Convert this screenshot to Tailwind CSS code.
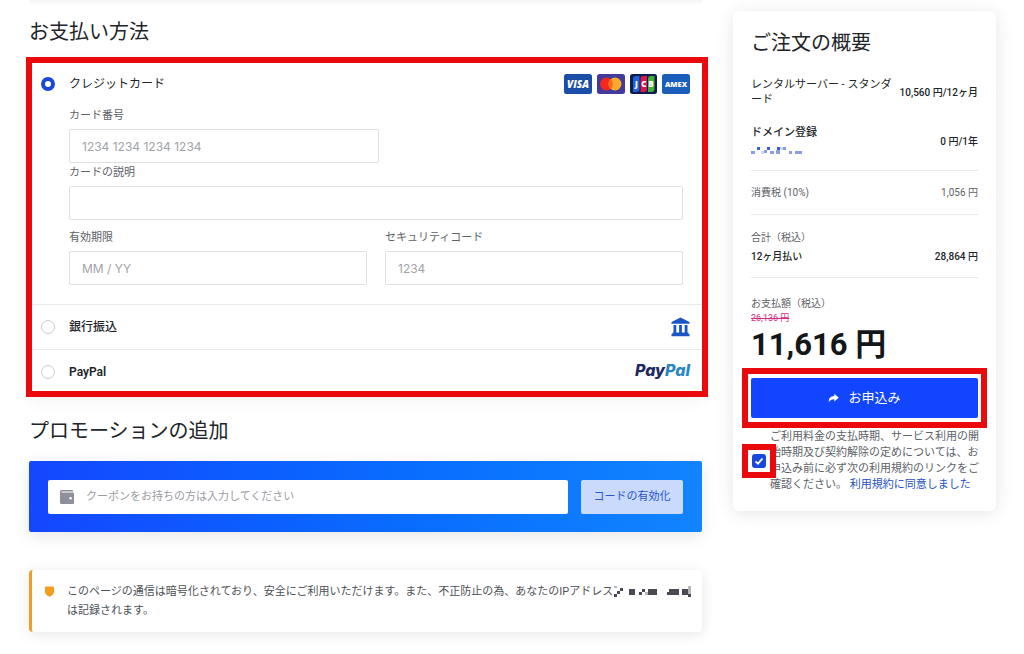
<!DOCTYPE html>
<html lang="ja">
<head>
<meta charset="utf-8">
<meta name="viewport" content="width=device-width, initial-scale=1">
<title>お支払い方法</title>
<script src="https://cdn.jsdelivr.net/npm/@tailwindcss/browser@4"></script>
</head>
<body class="bg-white font-['Roboto','Noto_Sans_CJK_JP',sans-serif] text-[#212529]">
<main class="flex min-h-screen items-start pr-7 pl-[29px]">
  <div class="min-w-0 flex-1 pb-5">
    <div class="h-[5px] bg-linear-to-b from-[#f4f4f4] to-white"></div>
    <form>
      <h2 class="mt-[13px] text-xl leading-7">お支払い方法</h2>
      <section class="relative mt-[14px] shadow-[0_4px_16px_rgba(0,0,0,0.08)]">
        <div class="flex h-12 items-center pr-3 pl-3">
          <input id="pay-card" type="radio" name="pay" checked class="size-[14px] appearance-none rounded-full border-4 border-[#1a48dc] bg-white">
          <label for="pay-card" class="ml-[14px] flex-1 text-xs">クレジットカード</label>
          <div class="flex gap-[5px]">
            <svg width="28" height="20" viewBox="0 0 28 20" role="img" aria-label="VISA"><rect width="28" height="20" rx="2.5" fill="#1a4da6"/><text x="14" y="14" text-anchor="middle" font-family="Open Sans" font-weight="800" font-style="italic" font-size="10" fill="#fff">VISA</text></svg>
            <svg width="28" height="20" viewBox="0 0 28 20" role="img" aria-label="Mastercard"><rect width="28" height="20" rx="2.5" fill="#443a9c"/><circle cx="9.500" cy="10" r="6.500" fill="#f5281e"/><circle cx="18" cy="10" r="6.500" fill="#fbaa2c"/><path d="M13.750 5.100a6.500 6.500 0 0 1 0 9.800a6.500 6.500 0 0 1 0-9.800z" fill="#fb6a1c"/></svg>
            <svg width="27" height="20" viewBox="0 0 27 20" role="img" aria-label="JCB"><rect width="27" height="20" rx="2.500" fill="#101c4e"/><path d="M3 5q0-3 3-3h3.500v13q0 3-3 3H3z" fill="#1d63d8"/><path d="M10.500 5q0-3 3-3H17v13q0 3-3 3h-3.500z" fill="#d9174c"/><path d="M18 5q0-3 3-3h3.500v13q0 3-3 3H18z" fill="#3fb03c"/><g font-family="Open Sans" font-weight="800" font-size="8" fill="#fff" text-anchor="middle"><text x="6.500" y="13">J</text><text x="13.800" y="13">C</text><text x="21" y="13">B</text></g></svg>
            <svg width="28" height="20" viewBox="0 0 28 20" role="img" aria-label="AMEX"><rect width="28" height="20" rx="2.500" fill="#1b5dbd"/><text x="14" y="12.500" text-anchor="middle" font-family="Open Sans" font-weight="800" font-size="7.500" fill="#fff">AMEX</text></svg>
          </div>
        </div>
        <div class="pt-px pr-[19px] pb-[19px] pl-10 text-[11px] leading-[14px] text-[#5d6268]">
          <label for="number" class="block">カード番号</label>
          <input id="number" placeholder="1234 1234 1234 1234" class="mt-[6px] block h-[34px] w-[310px] rounded-xs border border-[#dfe1e4] bg-white px-3 font-['Inter'] text-xs placeholder:text-[#a0a3a8]">
          <label for="desc" class="mt-[3px] block">カードの説明</label>
          <input id="desc" class="mt-[6px] block h-[34px] w-full rounded-xs border border-[#dfe1e4] bg-white px-3 font-['Inter'] text-xs">
          <div class="mt-[11px] grid grid-cols-2 gap-[18px]">
            <div>
              <label for="exp" class="block">有効期限</label>
              <input id="exp" placeholder="MM / YY" class="mt-[6px] block h-[34px] w-full rounded-xs border border-[#dfe1e4] bg-white px-3 font-['Inter'] text-xs placeholder:text-[#a0a3a8]">
            </div>
            <div>
              <label for="cvc" class="block">セキュリティコード</label>
              <input id="cvc" placeholder="1234" class="mt-[6px] block h-[34px] w-full rounded-xs border border-[#dfe1e4] bg-white px-3 font-['Inter'] text-xs placeholder:text-[#a0a3a8]">
            </div>
          </div>
        </div>
        <div class="flex h-[45px] items-center border-t border-[#e9eaec] px-3">
          <input id="pay-bank" type="radio" name="pay" class="size-[14px] appearance-none rounded-full border border-[#c9cccf] bg-white">
          <label for="pay-bank" class="ml-[14px] flex-1 text-xs font-medium">銀行振込</label>
          <svg width="19" height="20" viewBox="0 0 19 20" fill="#1a55c4" aria-hidden="true"><path d="M9.500 0.500L18.500 5v1.800H.5V5zM2.500 8h2.800v8H2.500zM8.100 8h2.800v8H8.100zM13.700 8h2.800v8h-2.800zM1.500 15.500h16v1.500h-16zM.5 17h18v2.200H.5z"/></svg>
        </div>
        <div class="flex h-[45px] items-center border-t border-[#e9eaec] px-3">
          <input id="pay-paypal" type="radio" name="pay" class="size-[14px] appearance-none rounded-full border border-[#c9cccf] bg-white">
          <label for="pay-paypal" class="ml-[14px] flex-1 text-xs font-semibold">PayPal</label>
          <span class="pb-1 font-['Inter'] text-base leading-6 font-extrabold text-[#1f2a60] italic">Pay<span class="text-[#2a86c4]">Pal</span></span>
        </div>
        <div class="pointer-events-none absolute -top-[3px] -right-[6px] -bottom-[3px] -left-[3px] border-6 border-[#ea0a0d]"></div>
      </section>

      <h2 class="mt-[23px] text-xl leading-7">プロモーションの追加</h2>
      <section class="mt-4 flex gap-[13px] rounded-xs bg-linear-to-r from-[#1546ff] to-[#1284ff] px-[19px] pt-[19px] pb-[18px] shadow-[0_4px_16px_rgba(0,0,0,0.1)]">
        <div class="flex h-[34px] flex-1 items-center rounded-xs bg-white pl-3">
          <svg width="14" height="14" viewBox="0 0 14 14" fill="#8d8f9a" aria-hidden="true"><path d="M1.500 0H12q1.200 0 1.200 1.200V1.600H1.600v.8H12.800Q14 2.400 14 3.600v9.200Q14 14 12.800 14H1.500Q0 14 0 12.500v-11Q0 0 1.500 0z"/><circle cx="10.600" cy="8.300" r="1.200" fill="#fff"/></svg>
          <input aria-label="クーポン" placeholder="クーポンをお持ちの方は入力してください" class="ml-3 min-w-0 flex-1 text-[11px] placeholder:text-[#9a9ca3]">
        </div>
        <button type="button" class="h-[34px] w-[102px] rounded-xs bg-[#c9dafd] text-[11px] text-[#2b55cc]">コードの有効化</button>
      </section>
    </form>

    <aside class="mt-[38px] flex items-start rounded-sm border-l-3 border-[#f09c28] bg-white py-3 pl-[13px] text-[11px] leading-[19px] whitespace-nowrap text-[#4d5156] shadow-[0_2px_14px_rgba(0,0,0,0.1)]">
      <svg class="mt-1 shrink-0" width="9" height="11" viewBox="0 0 9 11" fill="#f39c1f" aria-hidden="true"><path d="M1 .5h7q1 0 1 1V5.500Q9 9 4.500 10.700 0 9 0 5.500v-4q0-1 1-1z"/></svg>
      <p class="ml-[13px]">このページの通信は暗号化されており、安全にご利用いただけます。また、不正防止の為、あなたのIPアドレス<svg class="ml-px inline-block" width="78" height="12" viewBox="0 0 78 12" fill="#4a4a55" aria-hidden="true"><path d="M6 2h3v3H6zM3 5h3v3H3zM0 8h3v3H0zM15 3h6v6h-6zM25 6h3v3h-3zM28 3h3v3h-3zM34 3h9v6h-9zM53 6h3v3h-3zM55 3h10v6H55zM68 3h6v6h-6zM74 8h3v3h-3z"/><path d="M0 0h3v2H0zM31 6h3v3h-3zM74 0h3v8h-3z" opacity=".4"/></svg><br>は記録されます。</p>
    </aside>
  </div>

  <aside class="mt-[11px] ml-[31px] w-[263px] shrink-0 rounded-md bg-white px-[18px] pt-[18px] pb-[18px] shadow-[0_2px_18px_rgba(0,0,0,0.1)]">
    <h2 class="text-xl leading-7">ご注文の概要</h2>
    <div class="mt-5 flex items-center justify-between text-[11px] leading-[15px] whitespace-nowrap">
      <p>レンタルサーバー - スタンダ<br>ード</p>
      <p class="text-[10px] font-medium">10,560 円/12ヶ月</p>
    </div>
    <div class="mt-[18px] flex items-center justify-between border-b border-[#e9eaec] pb-[13px] text-[11px] leading-[15px]">
      <div class="font-medium">
        <p>ドメイン登録</p>
        <svg class="mt-[7px] mb-[3px]" width="52" height="7" viewBox="0 0 52 7" fill="#3b5fd2" aria-hidden="true"><path d="M6 0h3v3H6zM16 0h3v3h-3zM26 0h3v3h-3z"/><path d="M0 4h4v3H0zM19 4h4v3h-4zM25 3h4v4h-4zM32 0h3v3h-3zM38 4h3v3h-3zM44 4h7v3h-7zM13 3h3v3h-3z" opacity=".6"/><path d="M10 4h3v3h-3zM29 0h3v3h-3z" opacity=".25"/></svg>
      </div>
      <p class="text-[10px] font-medium">0 円/1年</p>
    </div>
    <div class="flex h-11 items-center justify-between border-b border-[#e9eaec] text-[10px] text-[#5d6268]">
      <p>消費税 (10%)</p><p>1,056 円</p>
    </div>
    <div class="border-b border-[#e9eaec] pt-[13px] pb-[11px] text-[10px] leading-[19px]">
      <p class="text-[#5d6268]">合計（税込）</p>
      <div class="flex justify-between font-medium"><p>12ヶ月払い</p><p>28,864 円</p></div>
    </div>
    <p class="mt-[18px] text-[10px] leading-[15px] text-[#5d6268]">お支払額（税込）</p>
    <p class="text-[9px] leading-[15px] text-[#d92b86]"><s>26,136 円</s></p>
    <p class="text-[31px] leading-[38px] font-bold text-[#14171a]">11,616 円</p>
    <div class="relative mt-[14px]">
      <button type="button" class="flex h-10 w-full items-center justify-center gap-[9px] rounded-xs bg-[#1245ff] text-[13px] text-white">
        <svg width="11" height="10" viewBox="0 0 11 10" fill="#fff" aria-hidden="true"><path d="M6.300.8L10.800 4.700 6.300 8.500V6.300Q2.500 6.200.8 9.200.2 3.300 6.300 3z"/></svg>お申込み
      </button>
      <div class="pointer-events-none absolute -top-[10px] -right-[9px] -bottom-[10px] -left-[9px] border-6 border-[#ea0a0d]"></div>
    </div>
    <div class="relative mt-[11px] pl-[19px] text-[11px] leading-4 whitespace-nowrap text-[#5d6268]">
      <p><label for="agree">ご利用料金の支払時期、サービス利用の開<br>始時期及び契約解除の定めについては、お<br>申込み前に必ず次の利用規約のリンクをご<br>確認ください。</label> <a href="#" class="text-[#2450c8]">利用規約に同意しました</a></p>
      <div class="absolute top-[15px] -left-[9px] flex size-[34px] items-center justify-center border-6 border-[#ea0a0d] bg-white">
        <input id="agree" type="checkbox" checked class="peer size-[14px] appearance-none rounded-[3px] bg-[#1a48dc]">
        <svg class="pointer-events-none absolute" width="10" height="10" viewBox="0 0 10 10" fill="none" stroke="#fff" stroke-width="1.800" aria-hidden="true"><path d="M1.500 5.300L4 7.600 8.500 2.500"/></svg>
      </div>
    </div>
  </aside>
</main>
</body>
</html>
